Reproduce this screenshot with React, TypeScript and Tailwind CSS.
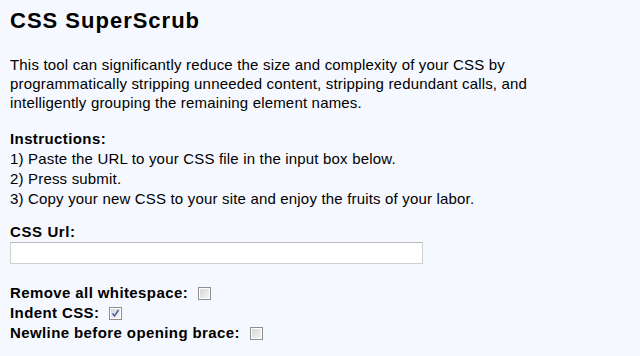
import React from "react";

function Box({ checked = false }: { checked?: boolean }) {
  return (
    <span className="relative inline-block h-[13px] w-[13px] shrink-0 border border-[#8f8f8f] bg-white p-[1px]">
      <span className="block h-full w-full bg-gradient-to-br from-[#d6d6d6] to-[#f6f6f6]" />
      {checked && (
        <svg viewBox="0 0 13 13" className="absolute left-[-1px] top-[-1px] h-[13px] w-[13px]">
          <path d="M3.5 6.5 L5.5 9 L9.5 3" fill="none" stroke="#4a5fa8" strokeWidth="1.5" />
        </svg>
      )}
    </span>
  );
}

export default function App() {
  return (
    <div className="min-h-[356px] w-[640px] bg-[#f5f8ff] px-[10px] pt-[8px] text-black [font-family:'Liberation_Sans',Arial,sans-serif]">
      <h1 className="text-[22px] font-bold leading-[26px] tracking-[1px]">CSS SuperScrub</h1>
      <p className="mt-[21px] text-[15px] leading-[19px] tracking-[0.18px]">
        This tool can significantly reduce the size and complexity of your CSS by
        <br />
        programmatically stripping unneeded content, stripping redundant calls, and
        <br />
        intelligently grouping the remaining element names.
      </p>
      <div className="mt-[17px] text-[15px] leading-[20px] tracking-[0.18px]">
        <div className="font-bold tracking-[0.4px]">Instructions:</div>
        <div>1) Paste the URL to your CSS file in the input box below.</div>
        <div>2) Press submit.</div>
        <div>3) Copy your new CSS to your site and enjoy the fruits of your labor.</div>
      </div>
      <div className="mt-[13px] text-[15px] font-bold leading-[20px] tracking-[0.6px]">CSS Url:</div>
      <input
        type="text"
        className="block h-[22px] w-[413px] border border-[#d0d0d0] border-t-[#b8b8b8] bg-white outline-none"
      />
      <div className="mt-[19px] flex flex-col text-[15px] font-bold leading-[20px] tracking-[0.4px]">
        <label className="flex items-center gap-[10px]">
          <span>Remove all whitespace:</span>
          <Box />
        </label>
        <label className="flex items-center gap-[10px]">
          <span>Indent CSS:</span>
          <Box checked />
        </label>
        <label className="flex items-center gap-[10px]">
          <span>Newline before opening brace:</span>
          <Box />
        </label>
      </div>
    </div>
  );
}
